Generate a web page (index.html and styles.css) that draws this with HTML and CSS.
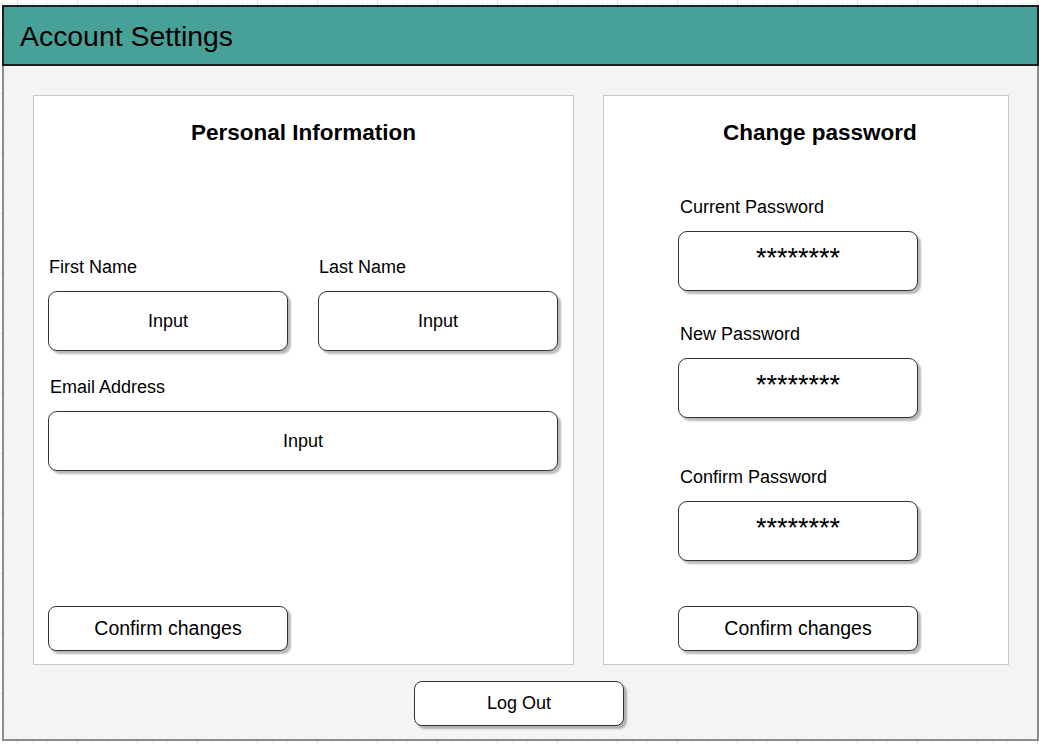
FILE: index.html
```html
<!DOCTYPE html>
<html lang="en">
<head>
<meta charset="utf-8">
<title>Account Settings</title>
<link rel="stylesheet" href="styles.css">
</head>
<body>
<div class="app">
  <header class="header">Account Settings</header>
  <main class="main">
    <div class="panels">
      <section class="panel panel-left">
        <h2 class="panel-title">Personal Information</h2>
        <div class="row">
          <div class="field">
            <div class="label label-name">First Name</div>
            <div class="box">Input</div>
          </div>
          <div class="field">
            <div class="label label-name">Last Name</div>
            <div class="box">Input</div>
          </div>
        </div>
        <div class="field field-email">
          <div class="label label-indent">Email Address</div>
          <div class="box">Input</div>
        </div>
        <button class="btn btn-confirm">Confirm changes</button>
      </section>
      <section class="panel panel-right">
        <h2 class="panel-title">Change password</h2>
        <div class="field pw pw-current">
          <div class="label label-indent">Current Password</div>
          <div class="box box-pw">********</div>
        </div>
        <div class="field pw pw-new">
          <div class="label label-indent">New Password</div>
          <div class="box box-pw">********</div>
        </div>
        <div class="field pw pw-confirm">
          <div class="label label-indent">Confirm Password</div>
          <div class="box box-pw">********</div>
        </div>
        <button class="btn btn-confirm">Confirm changes</button>
      </section>
    </div>
    <button class="btn btn-logout">Log Out</button>
  </main>
</div>
</body>
</html>
```
FILE: styles.css
```css
html, body {
  margin: 0;
  padding: 0;
  height: 100%;
}

body {
  font-family: "Liberation Sans", Arial, sans-serif;
  color: #000;
  background-color: #ffffff;
  background-image:
    linear-gradient(to right, #e2e2e2 1px, transparent 1px),
    linear-gradient(to bottom, #e2e2e2 1px, transparent 1px),
    linear-gradient(to right, #f2f2f2 1px, transparent 1px),
    linear-gradient(to bottom, #f2f2f2 1px, transparent 1px);
  background-size: 60px 60px, 60px 60px, 15px 15px, 15px 15px;
  background-position: 17px 33px, 17px 33px, 17px 33px, 17px 33px;
  overflow: hidden;
}

.app {
  margin: 5px 0 0 2px;
  width: 1037px;
}

.header {
  box-sizing: border-box;
  height: 61px;
  border: 2px solid #1e1e1e;
  background: #48a198;
  display: flex;
  align-items: center;
  padding: 2px 0 0 16px;
  font-size: 28.4px;
  color: #000;
}

.main {
  box-sizing: border-box;
  height: 675px;
  border: 2px solid #8c8c8c;
  border-top: none;
  background: #f4f4f4;
  padding: 29px 28px 0 29px;
  display: flex;
  flex-direction: column;
}

.panels {
  display: flex;
  gap: 29px;
}

.panel {
  box-sizing: border-box;
  height: 570px;
  background: #ffffff;
  border: 1px solid #c8c8c8;
  display: flex;
  flex-direction: column;
  padding: 0 14px 13px;
  flex-shrink: 0;
}

.panel-left {
  width: 541px;
}

.panel-right {
  width: 406px;
  padding-left: 74px;
}

.panel-title {
  margin: 24px 0 0;
  font-size: 22.5px;
  line-height: 26px;
  font-weight: bold;
  text-align: center;
}

.panel-right .panel-title {
  text-align: left;
  margin-left: 45px;
}

.row {
  display: flex;
  gap: 30px;
  margin-top: 111px;
}

.field {
  display: flex;
  flex-direction: column;
  width: 240px;
}

.field-email {
  width: 510px;
  margin-top: 26px;
}

.label {
  font-size: 18px;
  line-height: 20px;
  height: 20px;
  margin-bottom: 14px;
  white-space: nowrap;
}

.label-name {
  padding-left: 1px;
}

.label-indent {
  padding-left: 2px;
}

.box {
  box-sizing: border-box;
  height: 60px;
  background: #ffffff;
  border: 1px solid #333333;
  border-radius: 9px;
  box-shadow: 3px 3px 2px rgba(0, 0, 0, 0.28);
  display: flex;
  align-items: center;
  justify-content: center;
  font-size: 18px;
}

.box-pw {
  font-size: 27px;
  padding-bottom: 6px;
}

.pw-current {
  margin-top: 51px;
}

.pw-new {
  margin-top: 33px;
}

.pw-confirm {
  margin-top: 49px;
}

.btn {
  box-sizing: border-box;
  height: 45px;
  background: #ffffff;
  border: 1px solid #333333;
  border-radius: 8px;
  box-shadow: 3px 3px 2px rgba(0, 0, 0, 0.28);
  font-family: "Liberation Sans", Arial, sans-serif;
  font-size: 18px;
  color: #000;
  padding: 0;
  cursor: pointer;
}

.btn-confirm {
  width: 240px;
  margin-top: auto;
  font-size: 19.5px;
}

.btn-logout {
  width: 210px;
  margin-top: 16px;
  margin-left: 381px;
  align-self: flex-start;
}
```
